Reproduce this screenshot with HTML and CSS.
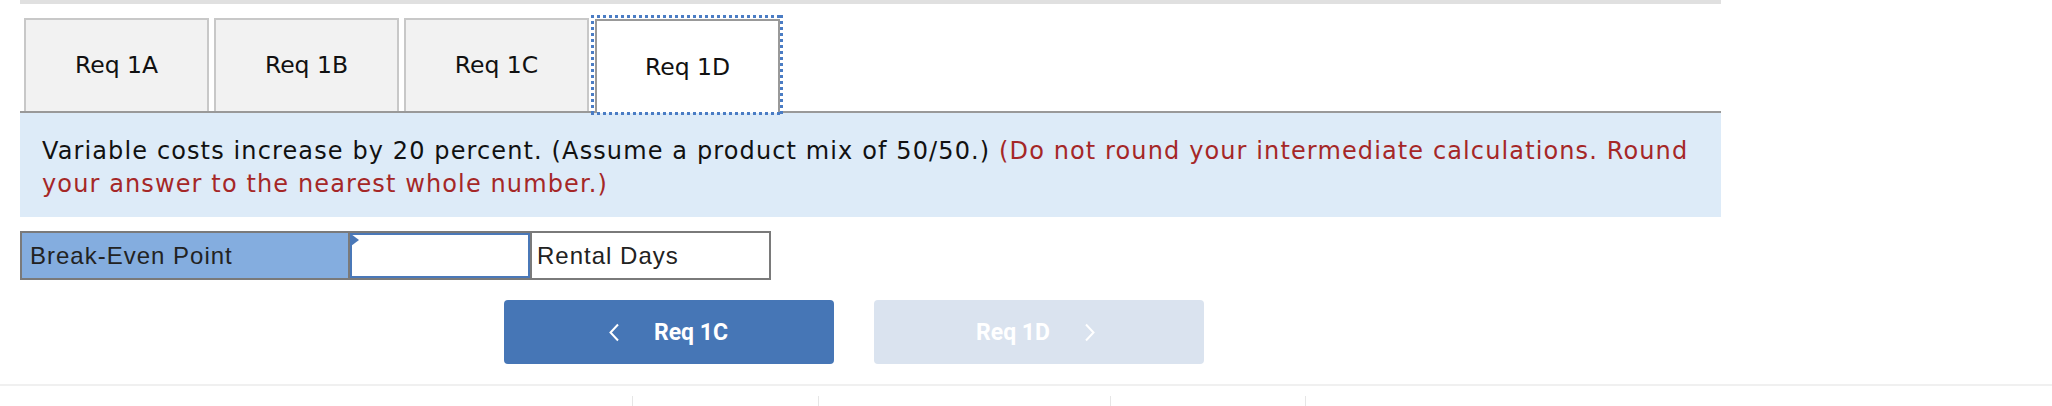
FILE: index.html
```html
<!DOCTYPE html>
<html lang="en">
<head>
<meta charset="utf-8">
<title>Req 1D</title>
<link rel="stylesheet" href="styles.css">
</head>
<body>
<div class="wrap">
  <div class="topbar"></div>
  <div class="tabs">
    <div class="tab">Req 1A</div>
    <div class="tab">Req 1B</div>
    <div class="tab">Req 1C</div>
    <div class="tab tab-active">Req 1D</div>
  </div>
  <div class="panel">
    Variable costs increase by 20 percent. (Assume a product mix of 50/50.) <span class="note">(Do not round your intermediate calculations. Round your answer to the nearest whole number.)</span>
  </div>
  <table class="answer">
    <tr>
      <td class="label">Break-Even Point</td>
      <td class="entry"><span class="flag"></span><div class="field"></div></td>
      <td class="unit">Rental Days</td>
    </tr>
  </table>
  <div class="nav">
    <button class="btn btn-prev" type="button">
      <svg class="chev" width="12" height="19" viewBox="0 0 12 19"><path d="M10 1.5 L2.5 9.5 L10 17.5" fill="none" stroke="#fff" stroke-width="2"/></svg>
      <span>Req 1C</span>
    </button>
    <button class="btn btn-next" type="button">
      <span>Req 1D</span>
      <svg class="chev" width="12" height="19" viewBox="0 0 12 19"><path d="M2 1.5 L9.5 9.5 L2 17.5" fill="none" stroke="#fff" stroke-width="2"/></svg>
    </button>
  </div>
</div>
<div class="footer">
  <div class="fcell fcell-first"></div>
  <div class="fcell fcell-a"></div>
  <div class="fcell fcell-b"></div>
  <div class="fcell fcell-c"></div>
  <div class="fcell fcell-d"></div>
</div>
</body>
</html>
```

FILE: styles.css
```css
html, body {
  margin: 0;
  padding: 0;
  background: #fff;
}
body {
  width: 2052px;
  height: 406px;
  overflow: hidden;
}
.wrap {
  margin-left: 20px;
  width: 1701px;
}
.topbar {
  height: 4px;
  background: #e0e0e0;
}
.tabs {
  display: flex;
  align-items: flex-end;
  gap: 5px;
  margin-top: 14px;
  padding-left: 4px;
  border-bottom: 2px solid #999;
  height: 93px;
}
.tab {
  box-sizing: border-box;
  width: 185px;
  height: 93px;
  border: 2px solid #c8c8c8;
  border-bottom: none;
  background: #f2f2f2;
  display: flex;
  align-items: center;
  justify-content: center;
  font-family: "DejaVu Sans", Verdana, sans-serif;
  font-size: 23.5px;
  color: #111;
  padding-bottom: 1px;
}
.tab-active {
  position: relative;
  background: #fff;
  border-color: #999;
  height: 94px;
  margin-bottom: -2px;
  margin-left: 1px;
}
.tab-active::before {
  content: "";
  position: absolute;
  left: -6px;
  right: -5px;
  top: -6px;
  bottom: -2px;
  background:
    repeating-linear-gradient(90deg, #4a7cc4 0 3px, transparent 3px 6px) top left / 100% 3px no-repeat,
    repeating-linear-gradient(90deg, #4a7cc4 0 3px, transparent 3px 6px) bottom left / 100% 3px no-repeat,
    repeating-linear-gradient(180deg, #4a7cc4 0 3px, transparent 3px 6px) top left / 3px 100% no-repeat,
    repeating-linear-gradient(180deg, #4a7cc4 0 3px, transparent 3px 6px) top right / 3px 100% no-repeat;
}
.panel {
  background: #ddebf8;
  padding: 22px 8px 16px 22px;
  font-family: "DejaVu Sans", Verdana, sans-serif;
  font-size: 24px;
  letter-spacing: 1.12px;
  line-height: 33px;
  color: #111;
}
.note {
  color: #a52727;
}
.answer {
  margin-top: 14px;
  border-collapse: collapse;
  font-family: "Liberation Sans", Arial, sans-serif;
  font-size: 24px;
  letter-spacing: 1px;
  color: #222;
}
.answer td {
  border: 2px solid #7a7a7a;
  height: 45px;
  padding: 0;
  box-sizing: border-box;
}
.label {
  width: 328px;
  background: #84addf;
  padding-left: 8px !important;
}
.entry {
  width: 182px;
  position: relative;
}
.field {
  box-sizing: border-box;
  height: 45px;
  border: 2px solid #4a78b8;
  background: #fff;
}
.flag {
  position: absolute;
  left: 1px;
  top: 1px;
  width: 0;
  height: 0;
  border-left: 8px solid #4a78b8;
  border-top: 6px solid transparent;
  border-bottom: 6px solid transparent;
}
.unit {
  width: 239px;
  padding-left: 5px !important;
}
.nav {
  display: flex;
  gap: 40px;
  margin-top: 20px;
  padding-left: 484px;
}
.btn {
  width: 330px;
  height: 64px;
  border: none;
  border-radius: 4px;
  display: flex;
  align-items: center;
  justify-content: center;
  gap: 34px;
  font-family: Roboto, "Liberation Sans", sans-serif;
  font-weight: 700;
  font-size: 23px;
  color: #fff;
  padding: 0;
}
.btn-prev {
  background: #4676b6;
  padding-right: 2px;
}
.btn-next {
  background: #dae3ef;
  padding-right: 6px;
}
.footer {
  margin-top: 20px;
  border-top: 2px solid #f0f0f0;
  display: flex;
  padding-top: 10px;
  height: 30px;
}
.fcell {
  border-left: 1px solid #e6e6e6;
}
.fcell-first {
  width: 632px;
  border-left: none;
}
.fcell-a { width: 185px; }
.fcell-b { width: 291px; }
.fcell-c { width: 194px; }
.fcell-d { width: 200px; }
```
